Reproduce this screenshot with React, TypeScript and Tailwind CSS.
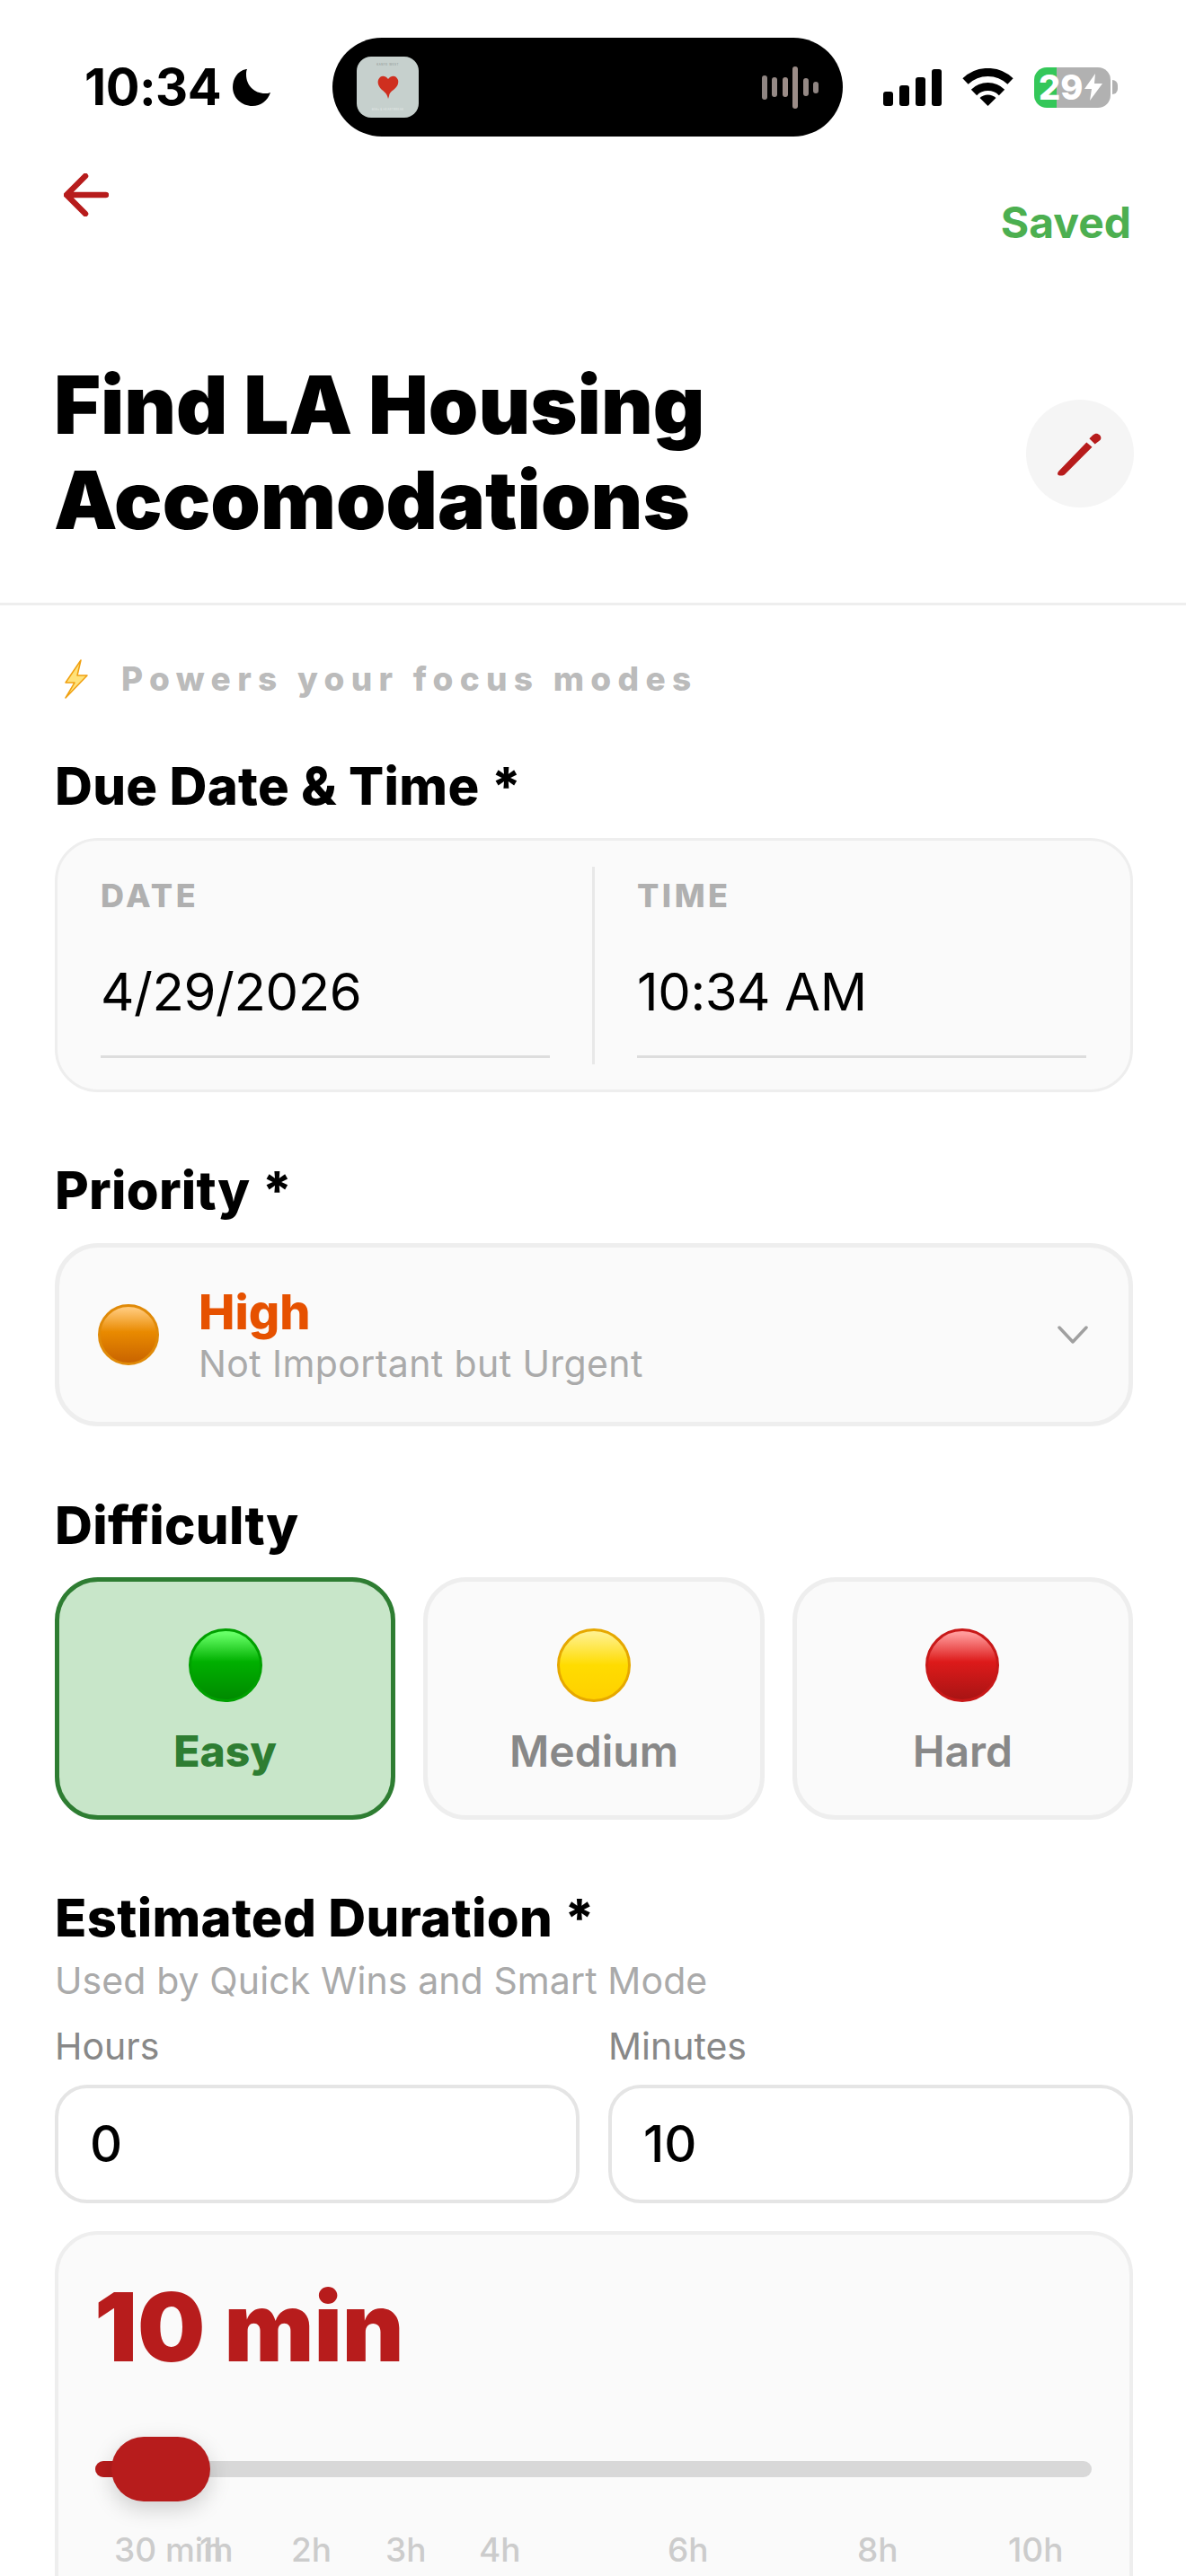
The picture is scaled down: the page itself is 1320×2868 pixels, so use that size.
import React from "react";

function Ball({ size, className }: { size: string; className: string }) {
  return <div className={`${size} shrink-0 rounded-full border-[3px] ${className}`} />;
}

function Label({ children, className = "" }: { children: React.ReactNode; className?: string }) {
  return <div className={`text-[58px] leading-[70px] font-extrabold text-black tracking-[0.3px] ${className}`}>{children}</div>;
}

function DateCell({ label, value }: { label: string; value: string }) {
  return (
    <div className="flex-1 flex flex-col">
      <div className="text-[36px] leading-[40px] font-extrabold tracking-[3.5px] text-[#b0b0b0]">{label}</div>
      <div className="text-[58px] leading-[70px] text-black mt-[52px] tracking-[-0.4px] border-b-[3px] border-[#dddddd] pb-[36px]">{value}</div>
    </div>
  );
}

function DiffCard({ name, ball, active }: { name: string; ball: string; active?: boolean }) {
  return (
    <div
      className={`flex-1 h-[270px] rounded-[48px] border-[5px] flex flex-col items-center pt-[52px] ${
        active ? "bg-[#c8e6c9] border-[#2e7d32]" : "bg-[#fafafa] border-[#eeeeee]"
      }`}
    >
      <Ball size="w-[82px] h-[82px]" className={ball} />
      <div className={`text-[48px] leading-[58px] mt-[26px] ${active ? "font-extrabold text-[#2e7d32]" : "font-semibold text-[#888888]"}`}>{name}</div>
    </div>
  );
}

const ticks = [
  { t: "30 min", x: 127 },
  { t: "1h", x: 222 },
  { t: "2h", x: 324 },
  { t: "3h", x: 429 },
  { t: "4h", x: 533 },
  { t: "6h", x: 743 },
  { t: "8h", x: 954 },
  { t: "10h", x: 1122 },
];

export default function App() {
  return (
    <div className="w-[1320px] h-[2868px] overflow-hidden bg-white font-[Inter,sans-serif] text-black">
      {/* status bar */}
      <div className="flex items-center pt-[42px]">
        <div className="w-[370px] pl-[94px] flex items-center gap-[13px]">
          <span className="text-[56px] leading-[60px] font-bold tracking-[-0.5px]">10:34</span>
          <svg width="43" height="42" viewBox="0 0 43 42" className="fill-black">
            <path d="M15 1C5 3 0 12 0 21C0 33 10 42 22 42C31 42 39 36 42 27C40 28 38 28 36 28C24 28 15 19 15 7C15 5 15 3 16 1Z" />
          </svg>
        </div>
        <div className="w-[568px] h-[110px] rounded-full bg-black flex items-center justify-between pl-[27px] pr-[27px]">
          <div className="w-[69px] h-[68px] rounded-[16px] bg-[#c6d0cd] flex flex-col items-center justify-between py-[7px]">
            <span className="text-[3px] leading-[4px] tracking-[0.5px] text-[#8a9290]">KANYE WEST</span>
            <svg width="24" height="28" viewBox="0 0 24 28">
              <path d="M12 27C11 22 9 20 5 17C1 13 0 9 1 6C3 1 8 0 12 5C16 0 21 1 23 6C24 10 22 14 18 17C15 19 13 21 13 24Z" fill="#cf2f1f" />
            </svg>
            <span className="text-[3px] leading-[4px] tracking-[0.3px] text-[#e4eae8]">808s & HEARTBREAK</span>
          </div>
          <div className="flex items-center gap-[5.5px]">
            <div className="w-[6px] h-[27px] rounded-full bg-[#8f8582]" />
            <div className="w-[6px] h-[22px] rounded-full bg-[#958985]" />
            <div className="w-[6px] h-[22px] rounded-full bg-[#9b8c87]" />
            <div className="w-[6px] h-[47px] rounded-full bg-[#9b8c87]" />
            <div className="w-[6px] h-[20px] rounded-full bg-[#958985]" />
            <div className="w-[6px] h-[13px] rounded-full bg-[#8f8582]" />
          </div>
        </div>
        <div className="ml-[45px] flex items-center">
          <div className="flex items-end gap-[7px] mr-[23px]">
            <div className="w-[11px] h-[16px] rounded-[3px] bg-black" />
            <div className="w-[11px] h-[23px] rounded-[3px] bg-black" />
            <div className="w-[11px] h-[32px] rounded-[3px] bg-black" />
            <div className="w-[11px] h-[41px] rounded-[3px] bg-black" />
          </div>
          <svg width="57" height="42" viewBox="0 0 57 42" className="mr-[23px]">
            <path d="M3.5 14.5A36 36 0 0 1 53.5 14.5" fill="none" stroke="#000" strokeWidth="9" />
            <path d="M13 27A22 22 0 0 1 44 27" fill="none" stroke="#000" strokeWidth="9" />
            <path d="M19.5 33A13 13 0 0 1 37.5 33L28.5 42Z" fill="#000" />
          </svg>
          <div className="relative w-[85px] h-[45px] rounded-[14px] bg-[linear-gradient(to_right,#34c759_29%,#b1b1b1_29%)] flex items-center pl-[5px] text-white font-extrabold text-[38px] leading-[45px]">
            <span>29</span>
            <svg width="20" height="30" viewBox="0 0 20 30" className="ml-[2px]">
              <path d="M12 0L0 17H8L6 30L20 11H11Z" fill="#fff" />
            </svg>
          </div>
          <div className="w-[6px] h-[16px] rounded-r-full bg-[#b1b1b1] ml-[2px]" />
        </div>
      </div>

      {/* nav */}
      <div className="h-[246px] pl-[71px] pr-[61px] flex items-start justify-between">
        <svg width="50" height="48" viewBox="0 0 50 48" className="mt-[41px]">
          <path d="M47 24H4M24 3L3 24L24 45" fill="none" stroke="#b71c1c" strokeWidth="6.5" strokeLinecap="round" strokeLinejoin="round" />
        </svg>
        <div className="mt-[69px] text-[48px] leading-[54px] font-bold text-[#4caf50]">Saved</div>
      </div>

      {/* title */}
      <div className="flex items-center justify-between pl-[60px] pr-[58px] pb-[59px] border-b-[3px] border-[#eeeeee]">
        <div className="text-[89px] leading-[106px] font-black pb-[2px]">
          Find LA Housing
          <br />
          Accomodations
        </div>
        <div className="w-[120px] h-[120px] rounded-full bg-[#f5f5f5] flex items-center justify-center">
          <svg width="52" height="52" viewBox="0 0 50 50">
            <path d="M1 47C1 45 2 44 3 43L32 13L38 18L9 47C7 49 2 49 1 47Z" fill="#b71c1c" />
            <path d="M35 9L39 5C41 3 44 3 46 5C48 7 48 10 46 11L41 15Z" fill="#b71c1c" />
          </svg>
        </div>
      </div>

      {/* hint */}
      <div className="flex items-center pl-[69px] pt-[60px]">
        <svg width="32" height="44" viewBox="0 0 32 44" className="mr-[34px]">
          <path d="M21 1L4 26H14L4 43L28 18H17Z" fill="#ffe27a" stroke="#f0a010" strokeWidth="1.5" strokeLinejoin="round" />
        </svg>
        <span className="text-[37px] leading-[44px] font-extrabold tracking-[7.3px] text-[#bbbbbb]">Powers your focus modes</span>
      </div>

      <div className="pl-[61px] pr-[59px]">
        <Label className="mt-[62px]">Due Date &amp; Time *</Label>
        <div className="mt-[23px] h-[283px] rounded-[48px] border-[3px] border-[#eeeeee] bg-[#fafafa] flex items-start pt-[41px] pl-[48px] pr-[49px]">
          <DateCell label="DATE" value="4/29/2026" />
          <div className="w-[3px] h-[220px] bg-[#e8e8e8] mx-[47px] self-center mt-[-41px]" />
          <DateCell label="TIME" value="10:34 AM" />
        </div>

        <Label className="mt-[74px]">Priority *</Label>
        <div className="mt-[24px] h-[204px] rounded-[48px] border-[5px] border-[#eeeeee] bg-[#fafafa] flex items-center pl-[43px] pr-[45px]">
          <Ball size="w-[68px] h-[68px]" className="border-[#e08a08] bg-[linear-gradient(to_bottom,#ffc878_4%,#e98a00_45%,#c96400_100%)]" />
          <div className="ml-[44px] flex-1 flex flex-col pt-[4px]">
            <span className="text-[54px] leading-[60px] font-extrabold text-[#e65100]">High</span>
            <span className="text-[41px] leading-[54px] text-[#aaaaaa] tracking-[0.4px]">Not Important but Urgent</span>
          </div>
          <svg width="34" height="20" viewBox="0 0 34 20">
            <path d="M2 2L17 18L32 2" fill="none" stroke="#a0a0a0" strokeWidth="3.5" strokeLinecap="round" strokeLinejoin="round" />
          </svg>
        </div>

        <Label className="mt-[75px]">Difficulty</Label>
        <div className="mt-[23px] flex gap-[31px]">
          <DiffCard name="Easy" active ball="border-[#00a000] bg-[linear-gradient(to_bottom,#66ff66_4%,#00b000_45%,#008a00_100%)]" />
          <DiffCard name="Medium" ball="border-[#e6a800] bg-[linear-gradient(to_bottom,#fff08a_4%,#ffdc00_50%,#ffd000_100%)]" />
          <DiffCard name="Hard" ball="border-[#c81818] bg-[linear-gradient(to_bottom,#ff9a9a_4%,#dd1a1a_45%,#a81414_100%)]" />
        </div>

        <Label className="mt-[74px]">Estimated Duration *</Label>
        <div className="text-[41px] leading-[50px] text-[#aaaaaa] mt-[10px] tracking-[0.1px]">Used by Quick Wins and Smart Mode</div>
        <div className="mt-[23px] flex gap-[32px]">
          {[
            ["Hours", "0"],
            ["Minutes", "10"],
          ].map(([l, v]) => (
            <div key={l} className="flex-1">
              <div className="text-[41px] leading-[50px] text-[#888888]">{l}</div>
              <div className="mt-[18px] h-[132px] rounded-[36px] border-[4px] border-[#e5e5e5] bg-white flex items-center pl-[35px] text-[56px] font-medium">{v}</div>
            </div>
          ))}
        </div>

        <div className="mt-[31px] h-[500px] rounded-[48px] border-[4px] border-[#eeeeee] bg-[#fafafa] pt-[43px] pl-[40px]">
          <div className="text-[106px] leading-[120px] font-black text-[#b71c1c]">10 min</div>
          <div className="relative w-[1109px] h-[18px] rounded-full bg-[#d8d8d8] mt-[89px] ml-[1px]">
            <div className="absolute left-0 top-0 h-[18px] w-[30px] rounded-l-full bg-[#b71c1c]" />
            <div className="absolute left-[18px] top-[-27px] w-[110px] h-[72px] rounded-full bg-[#b71c1c] shadow-[0_8px_24px_rgba(0,0,0,0.18)]" />
          </div>
          <div className="relative h-[44px] mt-[59px] text-[#cccccc] text-[37px] leading-[44px] font-medium">
            {ticks.map((k) => (
              <span key={k.t} className="absolute top-0 whitespace-nowrap" style={{ left: k.x - 105 }}>
                {k.t}
              </span>
            ))}
          </div>
        </div>
      </div>
    </div>
  );
}
